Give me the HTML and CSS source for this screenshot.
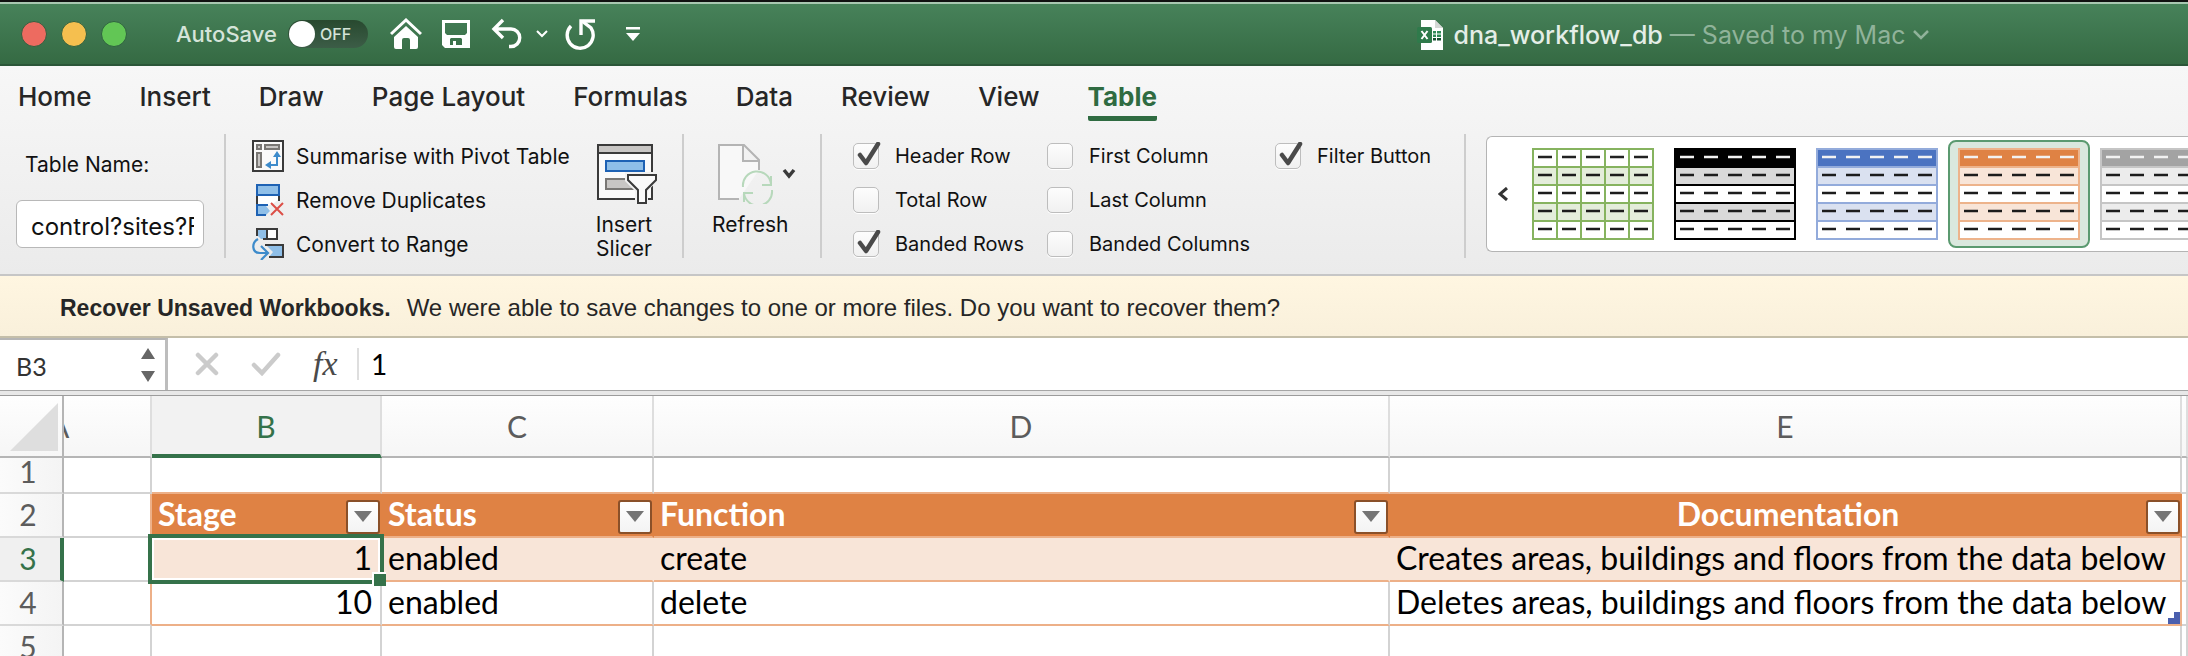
FILE: index.html
```html
<!DOCTYPE html>
<html lang="en">
<head>
<meta charset="utf-8">
<title>dna_workflow_db</title>
<link rel="stylesheet" href="styles.css">
</head>
<body>
<svg class="defs" aria-hidden="true">
  <symbol id="thumb-rows" viewBox="0 0 122 92">
    <rect class="t-line" width="122" height="92"/>
    <rect class="t-head" x="2" y="2" width="118" height="16"/>
    <path class="t-band" d="M2 20h118v16H2zM2 56h118v16H2z"/>
    <path class="t-plain" d="M2 38h118v16H2zM2 74h118v16H2z"/>
    <path class="t-grid" d="M25 2v88M49 2v88M73 2v88M97 2v88"/>
    <path class="t-head-dash" d="M6 9h110"/>
    <path class="t-dash" d="M6 27h110M6 45h110M6 63h110M6 81h110"/>
  </symbol>
</svg>
<div class="app">
  <header class="titlebar">
    <div class="lights">
      <button class="light close" aria-label="Close"></button>
      <button class="light minimise" aria-label="Minimise"></button>
      <button class="light zoom" aria-label="Zoom"></button>
    </div>
    <label class="autosave" for="autosave">AutoSave</label>
    <span class="switch"><input type="checkbox" id="autosave"><span class="switch-text">OFF</span></span>
    <div class="quick">
      <button class="q-home" aria-label="Home"><svg width="32" height="32" viewBox="0 0 32 32"><path d="M1 16L16 2l15 14" fill="none" stroke="#fff" stroke-width="3"/><path d="M4 19L16 8l12 11v10a2 2 0 0 1-2 2h-6v-9a2 2 0 0 0-2-2h-4a2 2 0 0 0-2 2v9H6a2 2 0 0 1-2-2z" fill="#fff"/></svg></button>
      <button class="q-save" aria-label="Save"><svg width="30" height="30" viewBox="0 0 30 30"><path fill="#fff" fill-rule="evenodd" d="M1 1h28v28H4l-3-3zM4 4v10l2 2h18l2-2V4zM9 20v6h3v-4h3v4h6v-6l-1-1H10z"/></svg></button>
      <button class="q-undo" aria-label="Undo"><svg width="32" height="32" viewBox="0 0 32 32" fill="none" stroke="#fff" stroke-width="3.4"><path d="M12 2L3 11l9 9M3 11h17a8.500 8.500 0 0 1 0 17.500h-2"/></svg></button>
      <button class="q-more" aria-label="Undo history"><svg width="14" height="12" viewBox="0 0 14 12" fill="none" stroke="#fff" stroke-width="2"><path d="M2 3l5 5 5-5"/></svg></button>
      <button class="q-redo" aria-label="Repeat"><svg width="32" height="32" viewBox="0 0 32 32" fill="none" stroke="#fff"><path d="M6 8a13 13 0 1 0 20 2L17 3" stroke-width="3.400" /><path d="M16 17V3h14" stroke-width="3.400"/></svg></button>
      <button class="q-custom" aria-label="Customise toolbar"><svg width="16" height="16" viewBox="0 0 16 16" fill="#fff"><path d="M1 1h14v2.500H1zM1 7h14L8 15z"/></svg></button>
    </div>
    <div class="doc">
      <svg width="28" height="32" viewBox="0 0 28 32"><path d="M5 1h14l8 8v22H5z" fill="#fff"/><path d="M19 1v8h8z" fill="#d5d8d6"/><g fill="#2f8a57"><path d="M17 12h3v2.500h-3zM21 12h4v2.500h-4zM17 15.500h3V18h-3zM21 15.500h4V18h-4z"/></g><path d="M17 19h3v2.500h-3zM21 19h4v2.500h-4z" fill="#174f30"/><rect x="1" y="8" width="15" height="16" rx="1.500" fill="#2f7a4b"/><path d="M5.500 12l6 8M11.500 12l-6 8" stroke="#fff" stroke-width="2"/></svg>
      <span class="doc-name">dna_workflow_db</span>
      <button class="doc-state">— Saved to my Mac<svg width="18" height="12" viewBox="0 0 18 12" fill="none" stroke="currentColor" stroke-width="2.500"><path d="M2 2l7 7 7-7"/></svg></button>
    </div>
  </header>

  <nav class="tabs">
    <a href="#home">Home</a><a href="#insert">Insert</a><a href="#draw">Draw</a><a href="#layout">Page Layout</a><a href="#formulas">Formulas</a><a href="#data">Data</a><a href="#review">Review</a><a href="#view">View</a><a href="#table" class="active">Table</a>
  </nav>

  <section class="ribbon">
    <div class="name-group">
      <label for="table-name">Table Name:</label>
      <input id="table-name" type="text" value="control?sites?Floors">
    </div>
    <div class="sep"></div>
    <div class="commands">
      <button><svg width="32" height="32" viewBox="0 0 32 32"><rect x="1" y="1" width="30" height="30" fill="#fafafa" stroke="#3a3a3a" stroke-width="2"/><g fill="#c8c6c4" stroke="#797774" stroke-width="2"><path d="M5 5h4v4H5zM13 5h14v4H13zM5 13h4v14H5z"/></g><path d="M25 15v10h-9" fill="none" stroke="#3d8bcb" stroke-width="2"/><path d="M25 11l4 6h-8zM13 25l6-4v8z" fill="#3d8bcb"/></svg>Summarise with Pivot Table</button>
      <button><svg width="32" height="32" viewBox="0 0 32 32"><path d="M5 12v9M27 12v5" stroke="#3a3a3a" stroke-width="2"/><path d="M6 12h20v4l-7 5H6z" fill="#fff"/><path d="M5 1h22v10H5z" fill="#8fbfe8" stroke="#1e62b4" stroke-width="2"/><path d="M6 22h8l4 5-4 4H6z" fill="#8fbfe8"/><path d="M16 21H5v10h9" fill="none" stroke="#1e62b4" stroke-width="2"/><path d="M19 19l12 12M31 19L19 31" stroke="#dc4f47" stroke-width="2"/></svg>Remove Duplicates</button>
      <button><svg width="32" height="32" viewBox="0 0 32 32"><path d="M6 2h10v9H9l-3-3z" fill="#8fbfe8"/><path d="M16 2h9v9h-9z" fill="#fff"/><path d="M5 8V1h20v10H11M15 1v10" fill="none" stroke="#3a3a3a" stroke-width="2"/><path d="M14 17h17v12H17l4-5z" fill="#8fbfe8"/><path d="M13 17h18v12H17" fill="none" stroke="#3a3a3a" stroke-width="2"/><path d="M6 11C-1 15 0 25 8 25h7M9 18l7 7-7 7" fill="none" stroke="#3d8bcb" stroke-width="2.200"/></svg>Convert to Range</button>
    </div>
    <button class="big slicer"><svg width="60" height="60" viewBox="0 0 60 60"><rect x="1" y="1" width="54" height="54" fill="#fafafa" stroke="#3a3a3a" stroke-width="2"/><path d="M2 2h52v7H2z" fill="#c8c6c4"/><path d="M1 9h54" stroke="#3a3a3a" stroke-width="2"/><rect x="9" y="17" width="38" height="10" fill="#8fbfe8" stroke="#1e62b4" stroke-width="2"/><rect x="9" y="35" width="32" height="10" fill="#c8c6c4" stroke="#797774" stroke-width="2"/><path d="M28 28h32v9L51 47v13H38V47L28 37z" fill="#f1f1f1"/><path d="M31 31h28v5L49 46v13h-8V46L31 36z" fill="#fafafa" stroke="#3a3a3a" stroke-width="2"/></svg><span>Insert<br>Slicer</span></button>
    <div class="sep"></div>
    <button class="big refresh"><span class="with-arrow"><svg width="56" height="60" viewBox="0 0 56 60" fill="none" stroke="#b4b4b4" stroke-width="2"><path d="M21 55H1V1h25l15 15v10M25 1v16h16" fill="#f8f8f8"/><g stroke="#b7d8bb"><path d="M25 43a14 14 0 0 1 28-3M53 32v9h-9M54 46a14 14 0 0 1-28 3M26 58v-9h9"/></g></svg><svg class="arrow" width="14" height="12" viewBox="0 0 14 12" fill="none" stroke="#3a3a3a" stroke-width="3.500"><path d="M2 2l5 6 5-6"/></svg></span><span>Refresh</span></button>
    <div class="sep"></div>
    <div class="options">
      <label><input type="checkbox" checked>Header Row</label>
      <label><input type="checkbox">Total Row</label>
      <label><input type="checkbox" checked>Banded Rows</label>
      <label><input type="checkbox">First Column</label>
      <label><input type="checkbox">Last Column</label>
      <label><input type="checkbox">Banded Columns</label>
      <label><input type="checkbox" checked>Filter Button</label>
    </div>
    <div class="sep"></div>
    <div class="gallery">
      <button class="prev" aria-label="Previous styles"><svg width="10" height="14" viewBox="0 0 10 14" fill="none" stroke="#333" stroke-width="3"><path d="M9 1L2 7l7 6"/></svg></button>
      <button class="style green" aria-label="Green style"><svg width="122" height="92"><use href="#thumb-rows"/></svg></button>
      <button class="style black" aria-label="Black style"><svg width="122" height="92"><use href="#thumb-rows"/></svg></button>
      <button class="style blue" aria-label="Blue style"><svg width="122" height="92"><use href="#thumb-rows"/></svg></button>
      <button class="style orange selected" aria-label="Orange style"><svg width="122" height="92"><use href="#thumb-rows"/></svg></button>
      <button class="style grey" aria-label="Grey style"><svg width="122" height="92"><use href="#thumb-rows"/></svg></button>
    </div>
  </section>

  <div class="notice"><strong>Recover Unsaved Workbooks.</strong><span>We were able to save changes to one or more files. Do you want to recover them?</span></div>

  <div class="formula-bar">
    <div class="name-box">
      <input type="text" value="B3" aria-label="Name box">
      <svg width="16" height="36" viewBox="0 0 16 36" fill="#666"><path d="M8 1l7 11H1zM1 24h14L8 35z"/></svg>
    </div>
    <button class="f-cancel" aria-label="Cancel"><svg width="24" height="24" viewBox="0 0 24 24" stroke="#cbcbcb" stroke-width="4.500" stroke-linecap="round"><path d="M3 3l18 18M21 3L3 21"/></svg></button>
    <button class="f-enter" aria-label="Enter"><svg width="30" height="24" viewBox="0 0 30 24" fill="none" stroke="#cbcbcb" stroke-width="4.500" stroke-linecap="round"><path d="M3 13l8 8L27 3"/></svg></button>
    <button class="fx" aria-label="Insert function">fx</button>
    <input class="formula" type="text" value="1" aria-label="Formula">
  </div>

  <div class="sheet">
    <table class="grid">
      <colgroup><col class="c-head"><col class="c-a"><col class="c-b"><col class="c-c"><col class="c-d"><col class="c-e"><col></colgroup>
      <thead>
        <tr><th class="corner"><svg width="48" height="48" viewBox="0 0 48 48"><path d="M48 0v48H0z" fill="#dedede"/></svg></th><th><div class="col-a">A</div></th><th class="on">B</th><th>C</th><th>D</th><th>E</th><th></th></tr>
      </thead>
      <tbody>
        <tr class="r1"><th>1</th><td></td><td></td><td></td><td></td><td></td><td></td></tr>
        <tr class="r2"><th>2</th><td></td>
          <td><div class="field">Stage<button aria-label="Filter Stage"><svg width="18" height="12" viewBox="0 0 18 12"><path d="M0 0h18L9 11z"/></svg></button></div></td>
          <td><div class="field">Status<button aria-label="Filter Status"><svg width="18" height="12" viewBox="0 0 18 12"><path d="M0 0h18L9 11z"/></svg></button></div></td>
          <td><div class="field">Function<button aria-label="Filter Function"><svg width="18" height="12" viewBox="0 0 18 12"><path d="M0 0h18L9 11z"/></svg></button></div></td>
          <td><div class="field centred">Documentation<button aria-label="Filter Documentation"><svg width="18" height="12" viewBox="0 0 18 12"><path d="M0 0h18L9 11z"/></svg></button></div></td>
          <td></td></tr>
        <tr class="r3"><th class="on">3</th><td></td><td class="num active-cell">1</td><td>enabled</td><td>create</td><td>Creates areas, buildings and floors from the data below</td><td></td></tr>
        <tr class="r4"><th>4</th><td></td><td class="num">10</td><td>enabled</td><td>delete</td><td class="last">Deletes areas, buildings and floors from the data below</td><td></td></tr>
        <tr><th>5</th><td></td><td></td><td></td><td></td><td></td><td></td></tr>
      </tbody>
    </table>
  </div>
</div>
</body>
</html>
```
FILE: styles.css
```css
* { box-sizing: border-box; }
body { margin: 0; font-family: Inter, "Liberation Sans", sans-serif; font-size: 21px; color: #111; background: #fff; overflow: hidden; }
button { border: 0; background: none; padding: 0; margin: 0; font: inherit; color: inherit; }
input { font: inherit; color: inherit; margin: 0; }
svg { display: block; flex: none; }
.defs { position: absolute; width: 0; height: 0; }
.app { display: flex; flex-direction: column; height: 100vh; overflow: hidden; }

/* Title bar */
.titlebar { flex: none; display: flex; align-items: center; height: 66px; padding: 2px 0 0 21px; border-top: 2px solid #111; border-bottom: 2px solid #2b5638; background: linear-gradient(#a8c7b1 0 2px, #47825a 2px, #356a43); color: #fff; white-space: nowrap; }
.titlebar::after { content: ""; flex: 1; }
.lights { display: flex; gap: 14px; width: 155px; }
.light { width: 26px; height: 26px; border-radius: 50%; border: 1px solid #2f6140; }
.close { background: #ed6b60; }
.minimise { background: #f5bf4f; }
.zoom { background: #62c655; }
.autosave { font-size: 22px; font-weight: 500; color: #d5e4d9; width: 112px; }
.switch { display: flex; align-items: center; width: 80px; height: 28px; border-radius: 14px; background: linear-gradient(#28492f, #3c5d47); }
.switch input { appearance: none; width: 26px; height: 26px; margin-left: 1px; border-radius: 50%; background: #fff; }
.switch-text { font-size: 16px; font-weight: 500; margin-left: 5px; color: #d5e4d9; }
.quick { flex: 3 1 auto; display: flex; align-items: center; margin-left: 22px; }
.q-save { margin-left: 19px; }
.q-undo { margin-left: 20px; }
.q-more { margin-left: 12px; }
.q-redo { margin-left: 16px; }
.q-custom { margin-left: 28px; }
.doc { display: flex; align-items: center; font-size: 25px; padding-top: 2px; }
.doc-name { font-weight: 500; color: #e4eee7; margin: 0 7px 0 9px; }
.doc-state { display: flex; align-items: center; gap: 6px; color: #90b39a; }

/* Tabs */
.tabs { flex: none; display: flex; gap: 48px; height: 68px; padding: 16px 18px 0; background: linear-gradient(#f7f7f7, #f3f3f3); font-size: 26px; line-height: 30px; font-weight: 500; }
.tabs a { color: #262626; text-decoration: none; height: 39px; white-space: nowrap; }
.tabs .active { color: #2f6b41; font-weight: 700; border-bottom: 5px solid #2f6b41; border-radius: 2px; }

/* Ribbon */
.ribbon { flex: none; display: flex; height: 142px; background: linear-gradient(#f3f3f3, #ebebeb); border-bottom: 2px solid #c6c6c6; white-space: nowrap; }
.sep { flex: none; width: 2px; height: 124px; background: #cdcdcd; }
.name-group { flex: none; width: 224px; padding: 17px 0 0 16px; }
.name-group label { display: block; padding-left: 9px; line-height: 28px; margin-bottom: 21px; }
.name-group input { display: block; width: 188px; height: 48px; padding: 5px 9px 0 14px; border: 1px solid #b8b8b8; border-radius: 6px; background: #fff; font-size: 24px; }
.commands { flex: none; width: 345px; margin-left: 26px; }
.commands button { display: flex; align-items: center; gap: 12px; height: 44px; }
.big { flex: none; display: flex; flex-direction: column; align-items: center; padding-top: 10px; height: 132px; line-height: 24px; }
.big > span:last-child { margin-top: 9px; }
.slicer { width: 60px; margin-right: 25px; }
.slicer span { margin-right: 6px; }
.refresh { align-items: flex-start; width: 136px; padding-left: 28px; }
.with-arrow { display: flex; align-items: center; gap: 8px; padding-left: 6px; }
.options { flex: none; display: grid; grid-template: repeat(3, 44px) / 194px 228px 189px; grid-auto-flow: column; margin-left: 31px; font-size: 20px; }
.options label { display: flex; align-items: center; gap: 16px; }
.options input { appearance: none; position: relative; width: 26px; height: 26px; border: 1px solid #bdbdbd; border-radius: 5px; background: linear-gradient(#fdfdfd, #f1f1f1); box-shadow: 0 1px 0 #fff; }
.options input:checked::after { content: ""; position: absolute; inset: -2px -3px 1px 3px; background: center / 100% 100% no-repeat url("data:image/svg+xml,%3Csvg xmlns='http://www.w3.org/2000/svg' viewBox='0 0 24 25'%3E%3Cpath d='M3 13l6 8L21 2' fill='none' stroke='%234a4a4a' stroke-width='4.500' stroke-linecap='round' stroke-linejoin='round'/%3E%3C/svg%3E"); }

/* Style gallery */
.gallery { flex: 1; min-width: 0; display: flex; margin: 2px 0 0 20px; height: 116px; padding: 3px 0; border: 1px solid #b4b4b4; border-right: 0; border-radius: 6px 0 0 6px; background: #fff; overflow: hidden; }
.prev { flex: none; width: 35px; padding-left: 11px; }
.style { flex: none; width: 142px; height: 108px; padding: 0 8px; border: 2px solid transparent; border-radius: 8px; }
.style.selected { background: #dae8de; border-color: #5b9a70; }
.green { --line: #86b35f; --head: #fff; --band: #e4eddb; --grid: #86b35f; --hdash: #222; }
.black { --line: #000; --head: #000; --band: #d9d9d9; }
.blue { --line: #93abdb; --head: #4b73c1; --band: #dae1f0; }
.orange { --line: #edb38b; --head: #df8244; --band: #f8e5d8; }
.grey { --line: #c5c5c5; --head: #a3a3a3; --band: #ececec; }
.t-line { fill: var(--line); }
.t-head { fill: var(--head); }
.t-band { fill: var(--band); }
.t-plain { fill: #fff; }
.t-grid { stroke: var(--grid, none); stroke-width: 2; }
.t-dash, .t-head-dash { stroke: #1c1c1c; stroke-width: 2.6; stroke-dasharray: 14 10; }
.t-head-dash { stroke: var(--hdash, #f2f2f2); }

/* Notice */
.notice { flex: none; display: flex; align-items: baseline; gap: 16px; height: 62px; padding: 18px 60px 0; background: linear-gradient(#fff6e1, #f9f0db); border-bottom: 2px solid #c4bea9; color: #262626; font-family: "Liberation Sans", Arial, sans-serif; font-size: 24px; line-height: 28px; white-space: nowrap; }
.notice strong { font-size: 23px; }

/* Formula bar */
.formula-bar { flex: none; display: flex; align-items: center; height: 58px; border-bottom: 1px solid #9c9c9c; background: linear-gradient(#fff 0 52px, #a6a6a6 52px 53px, #e8e8e8 53px); padding-bottom: 5px; font-family: Lato, Calibri, sans-serif; }
.name-box { display: flex; align-items: center; align-self: stretch; width: 168px; border-top: 2px solid #b5b5b5; border-right: 3px solid #bdbdbd; padding: 0 9px 0 16px; }
.name-box input { flex: 1; min-width: 0; border: 0; padding: 2px 0 0; background: none; font-size: 25px; color: #333; }
.f-cancel { margin-left: 27px; }
.f-enter { margin-left: 32px; }
.fx { width: 44px; margin-left: 32px; font: italic 34px/40px "Liberation Serif", serif; color: #4a4a4a; text-align: left; }
.formula { flex: 1; min-width: 0; height: 32px; border: 0; border-left: 2px solid #dedede; padding: 0 12px; background: none; font-size: 28px; color: #000; }

/* Worksheet */
.sheet { flex: 1; min-height: 0; overflow: hidden; }
.grid { width: 100%; table-layout: fixed; border-collapse: separate; border-spacing: 0; font-family: Lato, Calibri, sans-serif; font-size: 32px; line-height: 36px; color: #000; }
.c-head { width: 64px; }
.c-a { width: 88px; }
.c-b { width: 230px; }
.c-c { width: 272px; }
.c-d { width: 736px; }
.c-e { width: 792px; }
.grid th { font-size: 30px; font-weight: 400; color: #5c5c5c; padding: 0; }
.grid thead th { height: 62px; background: linear-gradient(#fefefe, #f6f6f6); border-bottom: 2px solid #b5b5b5; border-right: 2px solid #dedede; }
.grid thead .on { background: #f2f2f2; color: #35724a; border-bottom: 4px solid #35724a; padding-top: 2px; }
.grid thead .corner { border-right-color: #b5b5b5; padding: 2px 0 0 10px; }
.col-a { overflow: hidden; text-align: left; text-indent: -15px; }
.grid tbody th { background: linear-gradient(90deg, #fbfbfb, #f4f4f4); border-right: 2px solid #b5b5b5; border-bottom: 2px solid #d9d9d9; padding: 0 6px 2px 0; }
.grid tbody th.on { color: #35724a; border-right: 4px solid #35724a; padding-right: 4px; background: #f0f0f0; }
.grid td { height: 44px; padding: 0 6px 2px; border-right: 2px solid #d3d3d3; border-bottom: 2px solid #d3d3d3; white-space: nowrap; }
.grid .r1 td, .grid .r1 th { height: 36px; line-height: 24px; padding-bottom: 8px; }
.r1 td:nth-child(n+3):nth-child(-n+6),
.r2 td:nth-child(n+3):nth-child(-n+6),
.r3 td:nth-child(n+3):nth-child(-n+6),
.r4 td:nth-child(n+3):nth-child(-n+6) { border-bottom-color: #edb088; }
.grid .r2 td:nth-child(n+3):nth-child(-n+6) { background: #df8244; border-right-color: #df8244; color: #fff; font-weight: 700; padding: 0 0 0 6px; }
.r3 td:nth-child(n+3):nth-child(-n+6) { background: #f8e5d8; border-right-color: #f8e5d8; }
.grid tr:is(.r2, .r3, .r4) td:is(:nth-child(2), :nth-child(6)) { border-right-color: #edb088; }
.grid td.num { text-align: right; padding-right: 8px; }
.field { display: flex; align-items: center; justify-content: space-between; position: relative; height: 42px; padding-bottom: 2px; }
.field.centred { justify-content: center; }
.centred button { position: absolute; right: 0; }
.field button { display: grid; place-items: center; width: 34px; height: 34px; margin-top: 6px; border: 2px solid #8a5029; border-radius: 3px; background: linear-gradient(#fff, #f3f3f3); fill: #757575; }
.active-cell, .last { position: relative; }
.active-cell::before { content: ""; position: absolute; inset: -4px; border: 4px solid #35724a; box-shadow: inset 0 0 0 2px #fff; }
.active-cell::after { content: ""; position: absolute; right: -6px; bottom: -6px; width: 12px; height: 12px; border: solid #fff; border-width: 2px 0 0 2px; background: #35724a; }
.last::after { content: ""; position: absolute; right: 0; bottom: 0; width: 12px; height: 12px; background: #4a5fae; clip-path: polygon(50% 0, 100% 0, 100% 100%, 0 100%, 0 50%, 50% 50%); }
```
